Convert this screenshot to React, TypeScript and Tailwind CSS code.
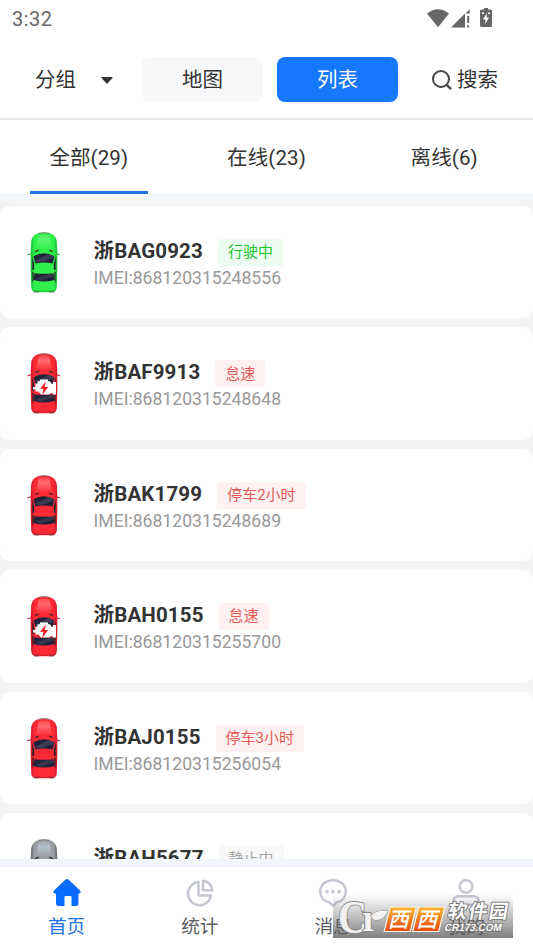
type CarKind = 'green' | 'red' | 'idle' | 'gray';

type Vehicle = {
    plate: string;
    imei?: string;
    status: string;
    tag: string;
    car: CarKind;
};

const vehicles: Vehicle[] = [
    { plate: '浙BAG0923', imei: '868120315248556', status: '行驶中', tag: 'bg-[#edfcf0] text-[#20c431]', car: 'green' },
    { plate: '浙BAF9913', imei: '868120315248648', status: '怠速', tag: 'bg-[#fff1f1] text-[#e25a58]', car: 'idle' },
    { plate: '浙BAK1799', imei: '868120315248689', status: '停车2小时', tag: 'bg-[#fff1f1] text-[#e25a58]', car: 'red' },
    { plate: '浙BAH0155', imei: '868120315255700', status: '怠速', tag: 'bg-[#fff1f1] text-[#e25a58]', car: 'idle' },
    { plate: '浙BAJ0155', imei: '868120315256054', status: '停车3小时', tag: 'bg-[#fff1f1] text-[#e25a58]', car: 'red' },
    { plate: '浙BAH5677', status: '静止中', tag: 'bg-[#f8f8f8] text-[#a6a6a6]', car: 'gray' },
];

const tabs = ['全部(29)', '在线(23)', '离线(6)'];

const paint = {
    green: { body: '#2ff04a', edge: '#18b837', hood: '#5cf56e' },
    red: { body: '#fb2a35', edge: '#c9182a', hood: '#ff6a70' },
    idle: { body: '#fb2a35', edge: '#c9182a', hood: '#ff6a70' },
    gray: { body: '#9a9da1', edge: '#63666a', hood: '#b5c0ca' },
};

const Car = ({ kind }: { kind: CarKind }) => {
    const { body, edge, hood } = paint[kind];
    return (
        <svg viewBox="0 0 34 61" className="h-[61px] w-[34px] shrink-0">
            <defs>
                <linearGradient id={`side-${kind}`} x1="0" x2="1" y1="0" y2="0">
                    <stop offset="0" stopColor={edge} />
                    <stop offset="0.14" stopColor={body} />
                    <stop offset="0.86" stopColor={body} />
                    <stop offset="1" stopColor={edge} />
                </linearGradient>
                <linearGradient id={`hood-${kind}`} x1="0" x2="0" y1="0" y2="1">
                    <stop offset="0" stopColor={hood} stopOpacity="0.4" />
                    <stop offset="0.35" stopColor={hood} />
                    <stop offset="1" stopColor={body} />
                </linearGradient>
            </defs>
            <path d="M4 21.800 1 22.800M29.500 21.800l3 1" stroke={edge} strokeWidth="1.2" strokeLinecap="round" />
            <path
                d="M11 1.200Q17-.4 23 1.200Q28.800 3.200 29.800 9.500L30.300 20V37L29.800 55Q29.500 60 25.500 60.300H8.500Q4.500 60 4.200 55L3.700 37V20L4.200 9.500Q5.200 3.200 11 1.200Z"
                fill={`url(#side-${kind})`}
            />
            <path d="M11.500 3.500Q17 1.500 22.500 3.500L25 18Q17 15.500 9 18Z" fill={`url(#hood-${kind})`} />
            <path d="M11.500 1.300Q17 .1 22.500 1.300" stroke="#777" strokeWidth="0.900" fill="none" />
            <path d="M7.500 20.300 8.500 18.800 12 17.500 11.500 19ZM26.500 20.300 25.500 18.800 22 17.500 22.500 19Z" fill="#2b2028" />
            <path d="M6.500 24.200Q17 18.500 27.500 24.200L25.500 31.500Q17 29.500 8.500 31.500Z" fill="#20223a" />
            <path d="M8 28.500 22 22 27 24.100 26.300 26.300 12 30.600Z" fill="#5a5d73" opacity="0.450" />
            <path d="M5.200 24.500 7.200 32V37.500L5.400 38ZM28.800 24.500 26.800 32v5.500l1.800.5ZM5.400 39.500 6.700 40.500V47.500L5.400 50.500ZM28.600 39.500l-1.300 1v7l1.300 3Z" fill="#23202d" />
            <path d="M8.500 32Q17 30 25.500 32Q26.500 36.500 25.500 41Q17 42 8.500 41Q7.500 36.500 8.500 32Z" fill={body} />
            <path d="M7.500 41.200Q17 42.500 26.500 41.200L27.300 48Q17 51 6.700 48Z" fill="#20223a" />
            <path d="M8.500 46 22 42 26 41.700 26.300 44.500 13 49Z" fill="#5a5d73" opacity="0.350" />
            <path d="M7 58.500Q17 60.500 27 58.500" stroke={edge} strokeWidth="0.700" fill="none" />
            <path d="M7 59.900H12M22 59.900H27" stroke="#444" strokeWidth="0.800" />
            {kind === 'idle' && (
                <>
                    <path
                        d="M10.500 28.300H13V26.500h8v1.800h2l1.500 2.500H26V29h3v12.500h-3.500V40H24l-2 1.500h-8L11.500 38.500H8.500V36.500H6v-2.500H8.500V30.500h2Z"
                        fill="#fff"
                    />
                    <path d="M19 28.500 13 35.800h3.500l-1.400 6.200 6.100-8h-3.600Z" fill="#ee1c20" />
                </>
            )}
        </svg>
    );
};

const StatusBar = () => (
    <div className="flex h-[37px] shrink-0 items-center justify-between pr-[41px] pl-3 text-[#666]">
        <span className="text-[20px] leading-none tracking-[0.5px]">3:32</span>
        <div className="flex items-start">
            <svg viewBox="0 0 22 19" className="h-[19px] w-[22px]" fill="#666">
                <path d="M11 18.200 0 4.500Q11-4 22 4.500Z" />
            </svg>
            <svg viewBox="0 0 20 19" className="ml-[2px] h-[19px] w-[20px]" fill="#666">
                <path d="M0 18.500 14 4.500V18.500ZM14.500 4.500 18.700.3V4.500ZM16.200 7h2v7h-2ZM16.200 16.300h2v2.200h-2Z" />
            </svg>
            <svg viewBox="0 0 12 20" className="-mt-px ml-[9px] h-[20px] w-[12px]">
                <path d="M4 0h4v1.500h2.500Q12 1.500 12 3V17.500Q12 19 10.500 19H1.500Q0 19 0 17.500V3Q0 1.500 1.500 1.500H4Z" fill="#666" />
                <path d="M7 5 3 11.500h2.500L5 16l4-6.500H6.500Z" fill="#fff" />
                <path d="M2 4.500h2v1.500H2ZM8 4.500h2v1.500H8Z" fill="#fff" />
            </svg>
        </div>
    </div>
);

const Toolbar = () => (
    <header className="flex h-[83px] shrink-0 items-start border-b-2 border-[#e9e9eb] pt-5 text-[20.500px] text-[#333]">
        <div className="flex h-[45px] w-[142px] items-center pt-px pl-[35px]">
            <span>分组</span>
            <svg viewBox="0 0 12 7" className="ml-[25px] h-[7px] w-3">
                <path d="M1 0h10q1 .3.500 1L6.700 6.300q-.7.700-1.400 0L.5 1Q0 .3 1 0Z" fill="#333" />
            </svg>
        </div>
        <button className="h-[45px] w-[121px] rounded-lg bg-[#f7f8fa] pt-0.5">地图</button>
        <button className="ml-[14px] h-[45px] w-[121px] rounded-lg bg-[#1677ff] pt-0.5 text-white">列表</button>
        <div className="ml-[34px] flex h-[45px] items-center pt-px">
            <svg viewBox="0 0 20 20" className="mr-[5px] h-5 w-5" fill="none" stroke="#444" strokeWidth="2">
                <circle cx="9" cy="9" r="8" />
                <path d="m15 15.200 4 4" strokeWidth="2.400" />
            </svg>
            <span>搜索</span>
        </div>
    </header>
);

const Tabs = () => (
    <nav className="grid h-[74px] shrink-0 grid-cols-3 text-[20.500px] text-[#333]">
        {tabs.map((tab, i) => (
            <div key={tab} className="flex flex-col items-center">
                <span className="flex flex-1 items-center pt-[5px] tracking-[0.100px]">{tab}</span>
                <span className={`h-[3px] w-[118px] ${i === 0 ? 'bg-[#2673e8]' : ''}`} />
            </div>
        ))}
    </nav>
);

const VehicleCard = ({ vehicle }: { vehicle: Vehicle }) => (
    <div className="flex h-[112.400px] shrink-0 items-start rounded-[10px] bg-white pt-[26px] pl-[27px]">
        <Car kind={vehicle.car} />
        <div className="ml-[32.500px] pt-[5px]">
            <div className="flex items-center">
                <h3 className="text-[20.500px] leading-[27px] font-bold tracking-[0.150px] text-[#333]">{vehicle.plate}</h3>
                <span className={`mt-[2px] ml-[15px] flex h-[27px] items-center rounded-[3px] px-[10px] text-[15px] ${vehicle.tag}`}>
                    {vehicle.status}
                </span>
            </div>
            {vehicle.imei && <p className="text-[17.600px] leading-[24px] text-[#999]">IMEI:{vehicle.imei}</p>}
        </div>
    </div>
);

const navItems = [
    {
        label: '首页',
        icon: (
            <path
                d="M12.300.8q1.700-1.400 3.400 0L27 11.500q1 1.300.4 2.200-.4.800-1.400.8h-.5v10q0 2.500-2.500 2.500h-4.500v-9q0-1-1-1h-5q-1 0-1 1v9H6q-3 0-3-2.500v-10H2q-1 0-1.400-.8Q0 12.800 1 11.500Z"
                fill="#0a6cff"
            />
        ),
    },
    {
        label: '统计',
        icon: (
            <g fill="none" stroke="#c5c8d2" strokeWidth="2.500">
                <path d="M12.500 3A11.600 11.600 0 1 0 25 16.500H12.500Z" strokeLinejoin="round" />
                <path d="M17 1.800V11.200h9.300Q25.500 3.500 17 1.800Z" strokeLinejoin="round" />
            </g>
        ),
    },
    {
        label: '消息',
        icon: (
            <>
                <path
                    d="M14 1.300C6.500 1.300 1.200 6.200 1.200 12.500c0 5.500 3.800 9.700 9.300 10.900L14 27l3.500-3.600c5.500-1.200 9.300-5.400 9.300-10.900C26.800 6.200 21.500 1.300 14 1.300Z"
                    fill="none"
                    stroke="#c5c8d2"
                    strokeWidth="2.500"
                    strokeLinejoin="round"
                />
                <path d="M8 12.700h.01M14 12.700h.01M20 12.700h.01" stroke="#c5c8d2" strokeWidth="3.800" strokeLinecap="round" />
            </>
        ),
    },
    {
        label: '我的',
        icon: (
            <g fill="none" stroke="#c5c8d2" strokeWidth="2.600">
                <circle cx="14" cy="7.500" r="6.300" />
                <path d="M6 17.300H22Q26.500 18 26.500 22V25.700H1.500V22Q1.500 18 6 17.300Z" strokeLinejoin="round" />
            </g>
        ),
    },
];

const BottomNav = () => (
    <nav className="grid h-[81px] shrink-0 grid-cols-4 bg-white">
        {navItems.map((item, i) => (
            <div key={item.label} className="flex flex-col items-center pt-[12px]">
                <svg viewBox="0 0 28 28" className="h-[28px] w-[28px]">
                    {item.icon}
                </svg>
                <span className={`mt-[6px] text-[18.700px] leading-[28px] ${i === 0 ? 'text-[#2273e8]' : 'text-[#5a5d63]'}`}>{item.label}</span>
            </div>
        ))}
    </nav>
);

const Watermark = () => (
    <svg viewBox="0 0 180 44" className="absolute right-5 bottom-[10px] h-[44px] w-[180px]">
        <defs>
            <linearGradient id="mark-bg" x1="0" x2="0" y1="0" y2="1">
                <stop offset="0" stopColor="#666" stopOpacity="0" />
                <stop offset="1" stopColor="#555" stopOpacity="0.750" />
            </linearGradient>
            <linearGradient id="mark-orange" x1="0" x2="0" y1="0" y2="1">
                <stop offset="0" stopColor="#f7b733" />
                <stop offset="1" stopColor="#e6480f" />
            </linearGradient>
        </defs>
        <rect width="180" height="44" fill="url(#mark-bg)" />
        <g fill="#f1f1f1" stroke="#888" strokeWidth="1.800" paintOrder="stroke">
            <text x="5" y="38.500" fontSize="47" fontFamily="Liberation Serif, serif" fontWeight="bold" textLength="29" lengthAdjust="spacingAndGlyphs">C</text>
            <text x="29" y="37" fontSize="38" fontFamily="Liberation Serif, serif" fontWeight="bold">r</text>
            <path d="M38 22Q42 16 55 17Q50 27 42 26Q39 25 38 22Z" strokeWidth="1" />
        </g>
        <g transform="translate(60.500 0) skewX(-14)">
            <g fill="url(#mark-orange)" stroke="#fff5e8" strokeWidth="1.200">
                <path d="M0 13H26V37.500H0Z" />
                <path d="M28.500 13H54.500V37.500H28.500Z" />
            </g>
            <g fill="#fff" fontSize="21" fontWeight="500" fontFamily="Noto Sans CJK SC, sans-serif">
                <text x="2.500" y="33">西</text>
                <text x="31" y="33">西</text>
            </g>
        </g>
        <g fill="#fff" stroke="#777" strokeWidth="1.800" paintOrder="stroke" fontWeight="bold">
            <text transform="translate(114 24) skewX(-10)" fontSize="19" fontFamily="Noto Sans CJK SC, sans-serif" textLength="60">软件园</text>
            <text transform="translate(111 37) skewX(-12)" fontSize="10.500" fontFamily="Liberation Sans, sans-serif" textLength="57" lengthAdjust="spacingAndGlyphs">CR173.COM</text>
        </g>
    </svg>
);

const App = () => {
    return (
        <div className="relative flex h-[948px] w-[533px] flex-col overflow-hidden bg-white font-['Roboto','Noto_Sans_CJK_SC',sans-serif]">
            <StatusBar />
            <Toolbar />
            <Tabs />
            <main className="flex min-h-0 flex-1 flex-col overflow-hidden bg-[#f4f4f4]">
                <div className="mb-[4px] h-2 shrink-0 bg-[#f2f6fb]" />
                <div className="flex flex-col gap-[9px]">
                    {vehicles.map((vehicle) => (
                        <VehicleCard key={vehicle.plate} vehicle={vehicle} />
                    ))}
                </div>
            </main>
            <div className="h-2 shrink-0 border-b border-[#e9edf3] bg-[#f2f6fb]" />
            <BottomNav />
            <Watermark />
        </div>
    );
};

export default App;
